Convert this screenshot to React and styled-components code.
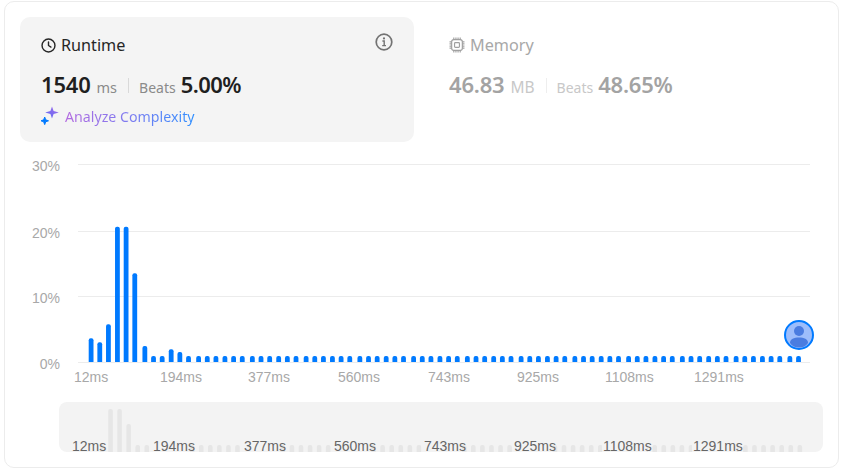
import React from "react";
import styled, { createGlobalStyle } from "styled-components";

const Global = createGlobalStyle`
  html, body { margin: 0; padding: 0; background: #fff; }
  body { font-family: "Noto Sans", "Open Sans", sans-serif; }
`;

const Page = styled.div`
  width: 841px;
  height: 468px;
  box-sizing: border-box;
  padding: 1px 2px 0 4px;
  overflow: hidden;
`;
const Card = styled.section`
  box-sizing: border-box;
  height: 467px;
  border: 1px solid #ececec;
  border-radius: 10px;
  padding: 15px 15px 0 15px;
  display: flex;
  flex-direction: column;
`;
const Stats = styled.div`
  display: grid;
  grid-template-columns: 394px 1fr;
`;
const Panel = styled.div`
  box-sizing: border-box;
  height: 125px;
  border-radius: 10px;
  padding: ${(p) => (p.$active ? "16px 20px 0 21px" : "16px 20px 0 35px")};
  background: ${(p) => (p.$active ? "#f4f4f4" : "transparent")};
  position: relative;
`;
const TitleRow = styled.div`
  display: flex;
  align-items: center;
  gap: 5px;
  height: 24px;
  font-size: 16.2px;
  color: ${(p) => (p.$active ? "#262626" : "#a8a8a8")};
`;
const InfoButton = styled.span`
  position: absolute;
  top: 16px;
  right: 21px;
  display: flex;
  color: #737373;
`;
const Metrics = styled.div`
  display: flex;
  align-items: baseline;
  margin-top: 12px;
  height: 32px;
`;
const Value = styled.span`
  font-size: 22px;
  font-weight: 600;
  letter-spacing: ${(p) => (p.$tight ? "-0.55px" : "-0.2px")};
  color: ${(p) => (p.$active ? "#1f1f1f" : "#a3a3a3")};
`;
const Unit = styled.span`
  font-size: ${(p) => (p.$active ? "14.5px" : "15.5px")};
  margin-left: 6px;
  color: ${(p) => (p.$active ? "#8a8a8a" : "#c8c8c8")};
`;
const Divider = styled.span`
  width: 1px;
  height: 15px;
  margin: 0 10px 0 11px;
  align-self: center;
  background: ${(p) => (p.$active ? "#d9d9d9" : "#eeeeee")};
`;
const Beats = styled.span`
  font-size: 14px;
  margin-right: 5px;
  color: ${(p) => (p.$active ? "#8a8a8a" : "#c8c8c8")};
`;
const Analyze = styled.div`
  display: flex;
  align-items: center;
  gap: 6px;
  margin-top: 4px;
  height: 22px;
`;
const Gradient = styled.span`
  font-size: 14.2px;
  background: linear-gradient(90deg, #b36ae0 0%, #7d7cf0 50%, #2f8fff 100%);
  -webkit-background-clip: text;
  background-clip: text;
  color: transparent;
`;
const MainChart = styled.svg`
  display: block;
  margin: 12px 0 0 -20px;
  font-family: "Liberation Sans", Arial, sans-serif;
`;
const MiniChart = styled.div`
  width: 764px;
  height: 50px;
  margin: 0 0 0 39px;
  border-radius: 8px;
  background: #f3f3f3;
  font-family: "Liberation Sans", Arial, sans-serif;
`;
const MiniSvg = styled.svg`
  display: block;
  overflow: visible;
`;

const rest = 356;
const tops = [338.3, 342.3, 324.3, 226.7, 226.7, 273.3, 346, 356, 356, 349.3, 352];
const barCount = 80;
const snap = [0, 8.67, 17.33, 26.33, 35, 43.67];

function barPath(x, y, w, bottom) {
  const r = Math.min(2, (bottom - y) / 2);
  return `M${x} ${bottom}V${y + r}Q${x} ${y} ${x + r} ${y}H${x + w - r}Q${x + w} ${y} ${x + w} ${y + r}V${bottom}Z`;
}

const mainLabels = [
  [74, "12ms"], [160, "194ms"], [248, "377ms"], [338, "560ms"],
  [428, "743ms"], [517, "925ms"], [605, "1108ms"], [694, "1291ms"],
];
const miniLabels = [
  [72, "12ms"], [153, "194ms"], [244, "377ms"], [334, "560ms"],
  [424, "743ms"], [514, "925ms"], [603, "1108ms"], [693, "1291ms"],
];
const grid = [[164, "30%"], [231, "20%"], [296, "10%"], [362, "0%"]];

function Chart() {
  return (
    <MainChart width="841" height="248" viewBox="0 154 841 248">
      {grid.map(([y, label]) => (
        <g key={label}>
          <line x1="78" x2="810" y1={y + 0.5} y2={y + 0.5} stroke="#ececec" />
          <text x="60" y={y + 7} textAnchor="end" fontSize="14" fill="#a8a8a8">{label}</text>
        </g>
      ))}
      {Array.from({ length: barCount }, (_, i) => {
        const x = 88.7 + 53.75 * Math.floor(i / 6) + snap[i % 6];
        return <path key={i} d={barPath(x, tops[i] ?? rest, 4.8, 362)} fill="#007aff" />;
      })}
      {mainLabels.map(([x, t]) => (
        <text key={t} x={x} y="382" fontSize="14" fill="#a8a8a8">{t}</text>
      ))}
      <circle cx="799" cy="335" r="14" fill="#9dbdfb" stroke="#007aff" strokeWidth="2" />
      <circle cx="799" cy="331" r="5" fill="#4a7ce0" />
      <path d="M790 343c0-4 4-5.500 9-5.500s9 1.500 9 5.500c-2 3-5 4.500-9 4.500s-7-1.500-9-4.500z" fill="#4a7ce0" />
    </MainChart>
  );
}

const miniTops = [452, 452, 444, 409, 409, 424, 445, 445];

function Mini() {
  return (
    <MiniChart>
      <MiniSvg width="764" height="50" viewBox="59 402 764 50">
        {Array.from({ length: barCount }, (_, i) => {
          const x = 81 + i * 9.07;
          return <path key={i} d={barPath(x, miniTops[i] ?? 445, 4.6, 452)} fill="#e6e6e6" />;
        })}
        {miniLabels.map(([x, t]) => {
          const w = t.length * 7.8 - 4;
          return (
            <g key={t}>
              <rect x={x - 1} y="441" width={w + 2} height="11" fill="#f3f3f3" />
              <text x={x} y="451" fontSize="14" fill="#666">{t}</text>
            </g>
          );
        })}
      </MiniSvg>
    </MiniChart>
  );
}

const Clock = () => (
  <svg width="15" height="15" viewBox="0 0 16 16" fill="none" stroke="#262626" strokeWidth="1.5" strokeLinecap="round" strokeLinejoin="round">
    <circle cx="8" cy="8" r="6.9" />
    <path d="M8 4.200V8l2.600 1.700" />
  </svg>
);
const Chip = () => (
  <svg width="16" height="16" viewBox="0 0 15 15" fill="none" stroke="#a0a0a0" strokeWidth="1.100">
    <rect x="2.500" y="2.500" width="10" height="10" rx="2" />
    <rect x="5.200" y="5.200" width="4.600" height="4.600" rx="0.8" />
    <path d="M4.500 0.500v2M6.500 0.500v2M8.500 0.500v2M10.500 0.500v2M4.500 12.500v2M6.500 12.500v2M8.500 12.500v2M10.500 12.500v2M0.500 4.500h2M0.500 6.500h2M0.500 8.500h2M0.500 10.500h2M12.500 4.500h2M12.500 6.500h2M12.500 8.500h2M12.500 10.500h2" />
  </svg>
);
const Info = () => (
  <svg width="18" height="18" viewBox="0 0 18 18" fill="none" stroke="currentColor" strokeWidth="1.700">
    <circle cx="9" cy="9" r="7.800" />
    <circle cx="9" cy="5.400" r="1.100" fill="currentColor" stroke="none" />
    <path d="M7.400 8h1.800v4.500M7.200 12.600h3.800" strokeWidth="1.400" />
  </svg>
);
const Sparkle = () => (
  <svg width="18" height="20" viewBox="0 0 18 20">
    <defs>
      <linearGradient id="spark" x1="0" y1="1" x2="1" y2="0">
        <stop offset="0" stopColor="#5b6cf5" />
        <stop offset="1" stopColor="#a56be8" />
      </linearGradient>
    </defs>
    <path d="M11 0.500l1.600 4.400 5.200 1.600-5.200 1.600L11 12.500 9.400 8.100 4.200 6.500l5.200-1.600z" fill="url(#spark)" />
    <path d="M3.700 11l1 2.800 2.800 1-2.800 1-1 2.800-1-2.800-2.700-1 2.700-1z" fill="#007aff" stroke="#007aff" strokeWidth="1" strokeLinejoin="round" />
  </svg>
);

export default function App() {
  return (
    <Page>
      <Global />
      <Card>
        <Stats>
          <Panel $active>
            <TitleRow $active><Clock />Runtime</TitleRow>
            <InfoButton><Info /></InfoButton>
            <Metrics>
              <Value $active>1540</Value>
              <Unit $active>ms</Unit>
              <Divider $active />
              <Beats $active>Beats</Beats>
              <Value $active $tight>5.00%</Value>
            </Metrics>
            <Analyze>
              <Sparkle />
              <Gradient>Analyze Complexity</Gradient>
            </Analyze>
          </Panel>
          <Panel>
            <TitleRow><Chip />Memory</TitleRow>
            <Metrics>
              <Value>46.83</Value>
              <Unit>MB</Unit>
              <Divider />
              <Beats>Beats</Beats>
              <Value>48.65%</Value>
            </Metrics>
          </Panel>
        </Stats>
        <Chart />
        <Mini />
      </Card>
    </Page>
  );
}
